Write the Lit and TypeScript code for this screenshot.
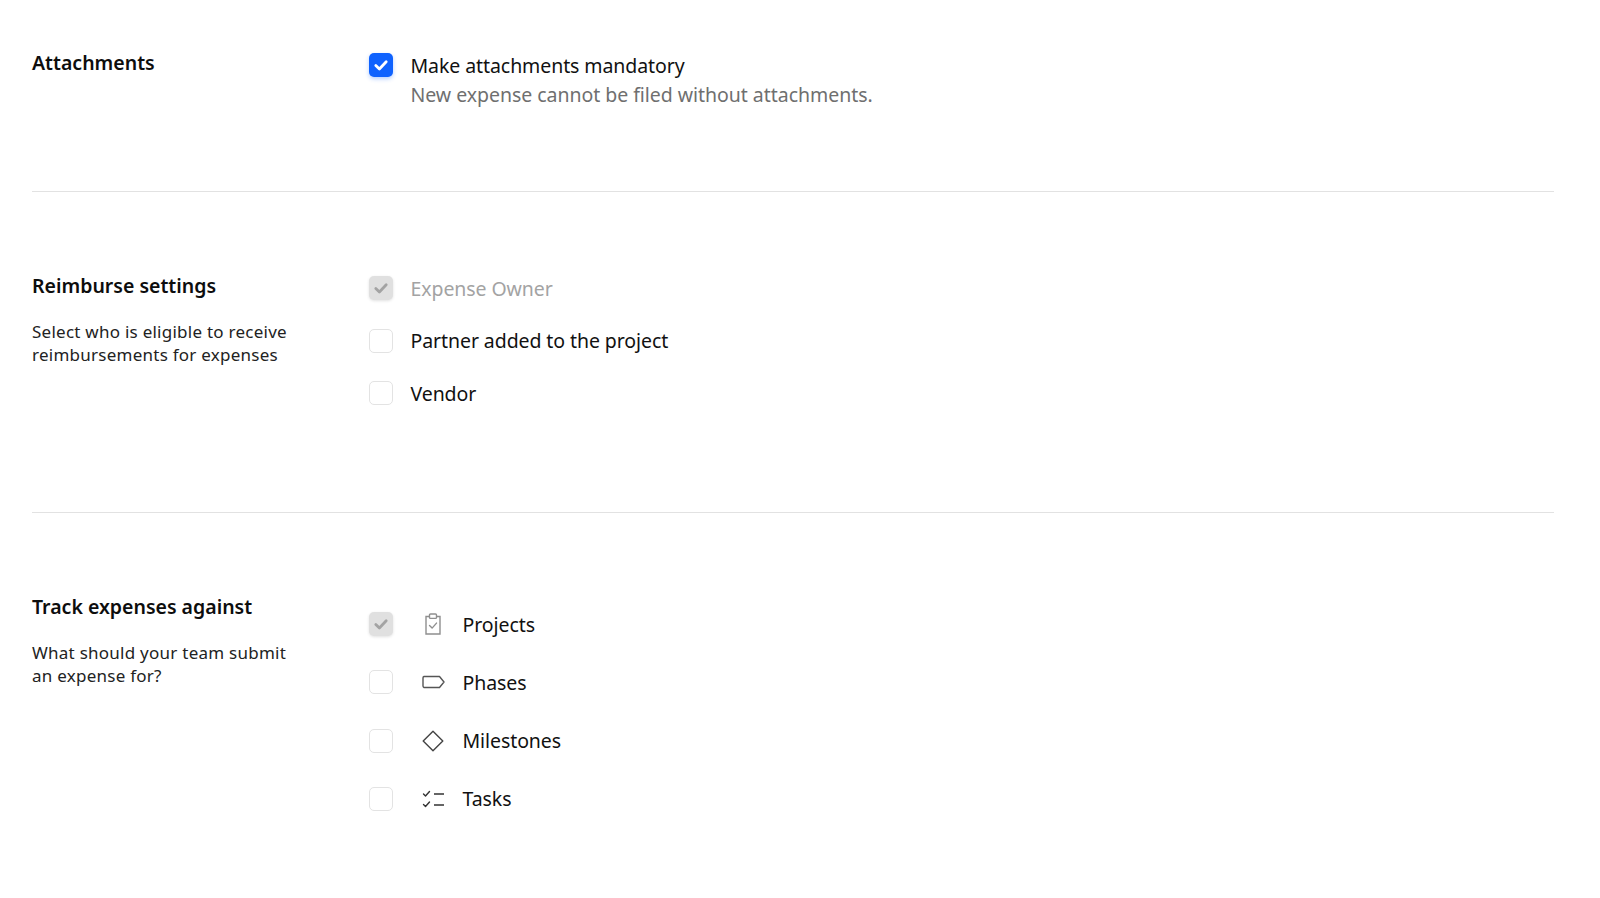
import { LitElement, html, css, svg } from "lit";
import { customElement } from "lit/decorators.js";

const check = svg`<svg class="tick" viewBox="0 0 24 24" width="24" height="24" fill="none"><path d="M6.8 12.4l3.6 3.6L17.2 8.8" stroke="currentColor" stroke-width="2.8" stroke-linecap="round" stroke-linejoin="round"/></svg>`;

const icons: Record<string, unknown> = {
  projects: svg`<svg viewBox="0 0 24 24" width="24" height="24" fill="none" stroke="#8f8f8f" stroke-width="1.4"><path d="M8.5 4.5H5v17.5h14V4.5h-3.5"/><rect x="8.5" y="2" width="7" height="4.4" rx="1"/><path d="M8.5 13.5l2.6 2.6 4.4-5" stroke-linecap="round" stroke-linejoin="round"/></svg>`,
  phases: svg`<svg viewBox="0 0 24 24" width="24" height="24" fill="none" stroke="#555" stroke-width="1.4"><path d="M3 6.5h15.5L23 12l-4.5 5.5H3a1.5 1.5 0 0 1-1-1.4V8a1.5 1.5 0 0 1 1-1.5z" stroke-linejoin="round"/></svg>`,
  milestones: svg`<svg viewBox="0 0 24 24" width="24" height="24" fill="none" stroke="#444" stroke-width="1.4"><path d="M12 2.2L21.8 12 12 21.8 2.2 12z" stroke-linejoin="round"/></svg>`,
  tasks: svg`<svg viewBox="0 0 24 24" width="24" height="24" fill="none" stroke="#333" stroke-width="1.4"><path d="M2.5 7l2 2 4-4.5M2.5 17.5l2 2 4-4.5" stroke-linecap="round" stroke-linejoin="round"/><path d="M13 7h10M13 18h10"/></svg>`,
};

@customElement("app-root")
export class AppRoot extends LitElement {
  static styles = css`
    :host {
      display: block;
      height: 898px;
      box-sizing: border-box;
      background: #fff;
      padding: 0 46px 0 32px;
      font-family: "Noto Sans", "Liberation Sans", sans-serif;
      color: #111;
      overflow: hidden;
    }
    .section {
      display: grid;
      grid-template-columns: 337px 1fr;
      align-items: start;
    }
    .s1 { height: 192px; padding-top: 49px; box-sizing: border-box; border-bottom: 1.5px solid #e2e2e2; }
    .s1 .opts { margin-top: 1px; }
    .s2 { height: 321px; padding-top: 80px; box-sizing: border-box; border-bottom: 1.5px solid #e2e2e2; }
    .s3 { padding-top: 80px; box-sizing: border-box; }
    h2 {
      margin: 0;
      font-size: 19.5px;
      line-height: 28px;
      font-weight: 600;
      color: #0d0d0d;
    }
    .desc {
      margin: 20px 0 0;
      font-size: 17px;
      line-height: 23px;
      letter-spacing: 0.25px;
      color: #222;
    }
    .opts { display: flex; flex-direction: column; }
    .row { display: flex; align-items: center; height: 30px; font-size: 19.5px; letter-spacing: -0.08px; }
    .s2 .opts { gap: 22.5px; padding-top: 1px; }
    .s3 .opts { gap: 28.3px; padding-top: 16px; }
    .box {
      width: 24px;
      height: 24px;
      box-sizing: border-box;
      border-radius: 5px;
      border: 1.5px solid #e3e3e3;
      background: #fff;
      flex: none;
      margin-right: 17.5px;
      position: relative;
    }
    .tick { position: absolute; inset: 0; display: block; }
    .box.on {
      background: #0f62fe;
      border: 0;
      color: #fff;
      box-shadow: 0 2px 4px rgba(15, 98, 254, 0.3);
    }
    .box.locked {
      background: #e0e0e0;
      border: 0;
      color: #a3a3a3;
      box-shadow: 0 1px 3px rgba(0, 0, 0, 0.12);
    }
    .dim { color: #a3a3a3; }
    .sub { color: #6f6f6f; font-size: 19.5px; letter-spacing: -0.04px; line-height: 29px; margin-left: 41.5px; }
    .ico { width: 24px; height: 24px; margin-left: 10.5px; margin-right: 17.5px; flex: none; display: block; }
    .ico svg { display: block; }
  `;

  private box(state = "") {
    return html`<span class="box ${state}">${state ? check : ""}</span>`;
  }

  private iconRow(icon: string, label: string, state = "") {
    return html`<div class="row">${this.box(state)}<span class="ico">${icons[icon]}</span><span>${label}</span></div>`;
  }

  render() {
    return html`
      <section class="section s1">
        <h2>Attachments</h2>
        <div class="opts">
          <div class="row">${this.box("on")}<span>Make attachments mandatory</span></div>
          <div class="sub">New expense cannot be filed without attachments.</div>
        </div>
      </section>
      <section class="section s2">
        <div>
          <h2>Reimburse settings</h2>
          <p class="desc">Select who is eligible to receive<br />reimbursements for expenses</p>
        </div>
        <div class="opts">
          <div class="row">${this.box("locked")}<span class="dim">Expense Owner</span></div>
          <div class="row">${this.box()}<span>Partner added to the project</span></div>
          <div class="row">${this.box()}<span>Vendor</span></div>
        </div>
      </section>
      <section class="section s3">
        <div>
          <h2>Track expenses against</h2>
          <p class="desc">What should your team submit<br />an expense for?</p>
        </div>
        <div class="opts">
          ${this.iconRow("projects", "Projects", "locked")}
          ${this.iconRow("phases", "Phases")}
          ${this.iconRow("milestones", "Milestones")}
          ${this.iconRow("tasks", "Tasks")}
        </div>
      </section>
    `;
  }
}
